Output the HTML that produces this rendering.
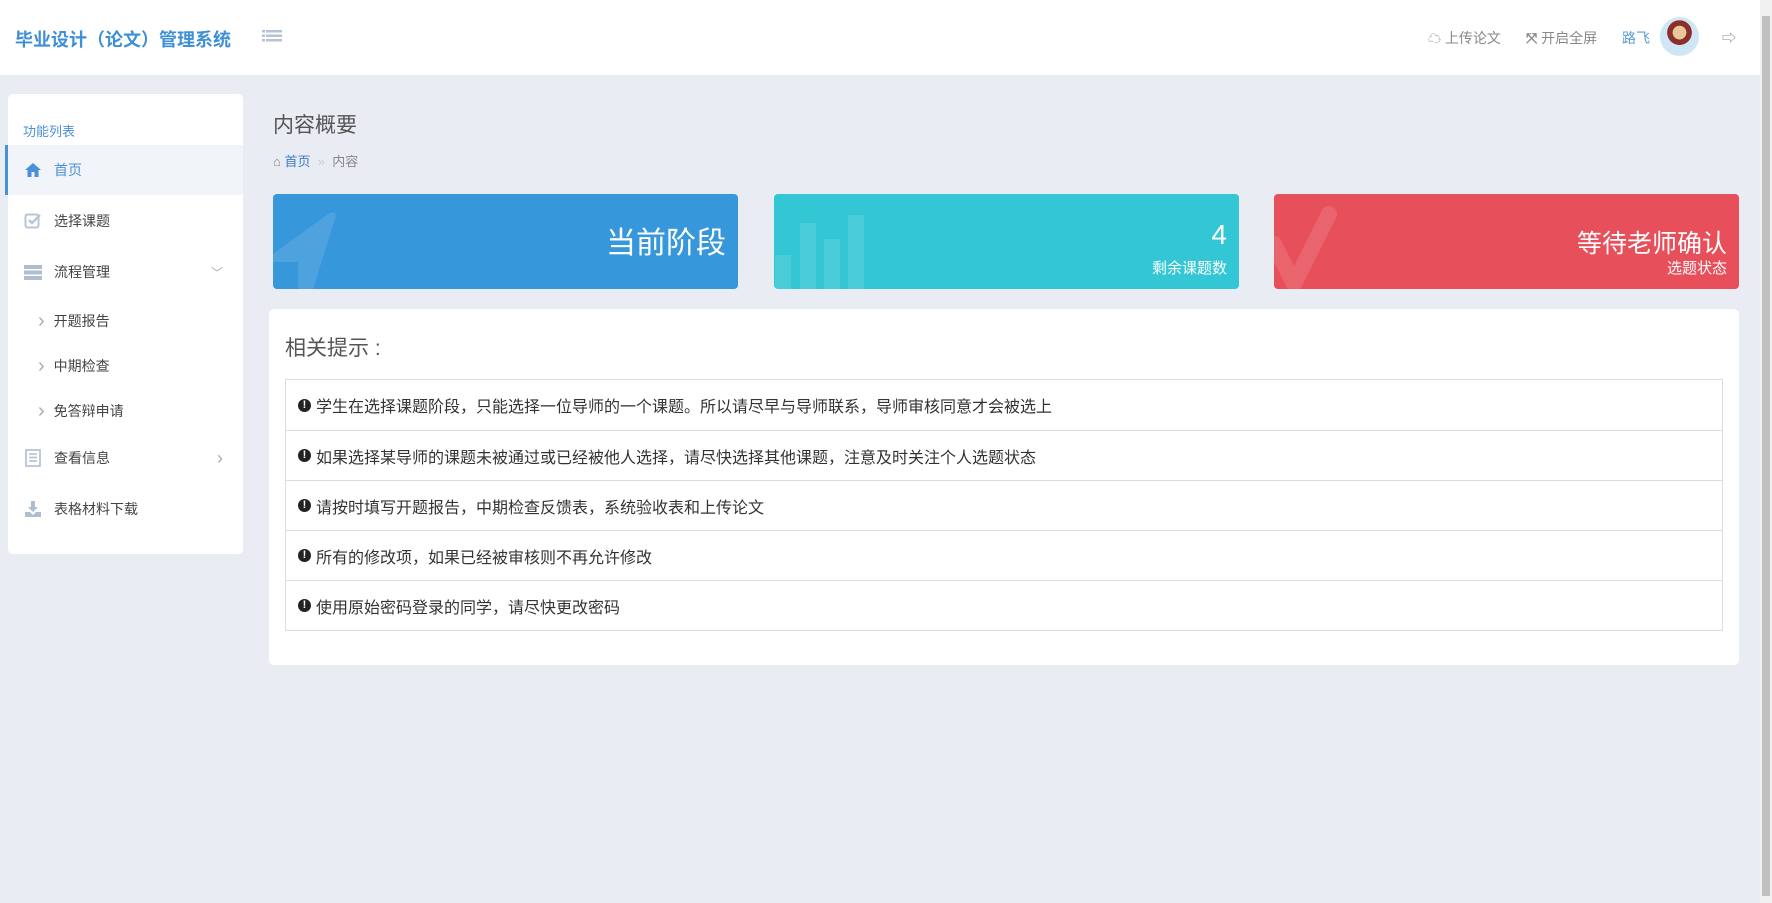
<!DOCTYPE html>
<html><head><meta charset="utf-8"><style>
*{margin:0;padding:0;box-sizing:border-box}
body{width:1772px;height:903px;overflow:hidden;background:#e9ecf3;font-family:"Liberation Sans","Noto Sans CJK SC",sans-serif;position:relative;color:#333}
.hdr{position:absolute;left:0;top:0;width:1760px;height:75px;background:#fff}
.title{position:absolute;left:15px;top:26px;font-size:18px;font-weight:bold;color:#3d8fd6}
.menu{position:absolute;left:262px;top:29px}
.hr{position:absolute;top:28px;font-size:14px;color:#888}
.sb{position:absolute;right:0;top:0;width:12px;height:903px;background:#f1f1f1}
.sb div{position:absolute;left:2px;top:16px;width:8px;height:880px;background:#c1c1c1}
.side{position:absolute;left:8px;top:94px;width:235px;height:460px;background:#fff;border-radius:5px}
.side .lbl{position:absolute;left:15px;top:27px;font-size:13px;color:#4a90d9}
.it{position:absolute;left:0;width:235px;height:50px;font-size:14px;color:#444;display:flex;align-items:center}
.it .ic{width:18px;height:18px;margin-left:16px;margin-right:12px}
.act{background:#f1f4f8;border-left:3px solid #4a90d9;left:-3px;width:238px}
.sub{position:absolute;left:30px;font-size:14px;color:#444;line-height:20px}
.sub::before{content:"›";color:#aaa;font-size:20px;margin-right:9px;position:relative;top:1px}
.ct{position:absolute;left:273px;top:109px;font-size:21px;color:#555}
.bc{position:absolute;left:273px;top:151px;font-size:13px;color:#888}
.card{position:absolute;top:194px;height:95px;width:465px;border-radius:4px;overflow:hidden;color:#fff}
.panel{position:absolute;left:269px;top:309px;width:1470px;height:356px;background:#fff;border-radius:5px}
.panel h3{position:absolute;left:16px;top:23px;font-size:21px;font-weight:normal;color:#555}
.tb{position:absolute;left:16px;top:70px;width:1438px;border:1px solid #ddd}
.row{height:50px;border-top:1px solid #ddd;display:flex;align-items:center;padding-left:12px;font-size:16px;color:#333}
.row:first-child{border-top:none}
.ex{display:inline-block;width:13px;height:13px;border-radius:50%;background:#222;color:#fff;font-size:11px;font-weight:bold;text-align:center;line-height:13px;margin-right:5px}
</style></head><body>
<div class="hdr">
<div class="title">毕业设计（论文）管理系统</div>
<svg class="menu" width="20" height="16" viewBox="0 0 20 16"><g fill="#b5c3d4"><rect x="0" y="1" width="3" height="2.5"/><rect x="4" y="1" width="16" height="2.5"/><rect x="0" y="5.5" width="3" height="2.5"/><rect x="4" y="5.5" width="16" height="2.5"/><rect x="0" y="10" width="3" height="2.5"/><rect x="4" y="10" width="16" height="2.5"/></g></svg>
<div class="hr" style="left:1428px"><span style="font-size:13px">☁</span> 上传论文</div>
<div class="hr" style="left:1526px"><span style="font-weight:bold">⤧</span> 开启全屏</div>
<div class="hr" style="left:1622px;color:#5b9bd5">路飞</div>
<div style="position:absolute;left:1660px;top:17px;width:39px;height:39px;border-radius:50%;background:radial-gradient(circle at 50% 40%,#e8c79a 0 22%,#8b2f2a 23% 40%,#cfe6f7 41%);"></div>
<div class="hr" style="left:1722px;font-size:14px">⇨</div>
</div>
<div class="sb"><div></div></div>

<div class="side">
<div class="lbl">功能列表</div>
<div class="it act" style="top:51px"><svg class="ic" viewBox="0 0 18 18"><path d="M9 2L1 9h2.5v7h4v-5h3v5h4V9H17z" fill="#4a90d9"/></svg><span style="color:#4a90d9">首页</span></div>
<div class="it" style="top:102px"><svg class="ic" viewBox="0 0 18 18"><rect x="1.5" y="2.5" width="13" height="13" rx="2" fill="none" stroke="#b8c6d6" stroke-width="2"/><path d="M5 8l3 3 8-8" fill="none" stroke="#b8c6d6" stroke-width="2.5"/></svg>选择课题</div>
<div class="it" style="top:153px"><svg class="ic" viewBox="0 0 18 18"><rect x="0" y="2" width="18" height="4" fill="#aebdd0"/><rect x="0" y="7.5" width="18" height="4" fill="#aebdd0"/><rect x="0" y="13" width="18" height="4" fill="#aebdd0"/></svg>流程管理<span style="position:absolute;right:20px;color:#aaa;font-size:12px">﹀</span></div>
<div class="sub" style="top:216px">开题报告</div>
<div class="sub" style="top:261px">中期检查</div>
<div class="sub" style="top:306px">免答辩申请</div>
<div class="it" style="top:339px"><svg class="ic" viewBox="0 0 18 18"><rect x="2" y="1" width="14" height="16" fill="none" stroke="#aebdd0" stroke-width="1.6"/><path d="M5 5h8M5 8.5h8M5 12h8" stroke="#aebdd0" stroke-width="1.4"/></svg>查看信息<span style="position:absolute;right:20px;color:#aaa;font-size:18px">›</span></div>
<div class="it" style="top:390px"><svg class="ic" viewBox="0 0 18 18"><path d="M7 1h4v6h3l-5 5-5-5h3z M1 12h5l3 3 3-3h5v5H1z" fill="#aebdd0"/></svg>表格材料下载</div>
</div>

<div class="ct">内容概要</div>
<div class="bc"><span style="color:#888">⌂</span> <span style="color:#3a7bc8">首页</span> &nbsp;<span style="color:#ccc">»</span>&nbsp; 内容</div>

<div class="card" style="left:273px;background:#3697db">
<svg style="position:absolute;left:0;top:0" width="100" height="95"><path d="M0 60L55 20Q65 15 62 25L40 95H25V68H0z" fill="rgba(255,255,255,.12)"/></svg>
<div style="position:absolute;right:12px;top:24px;font-size:30px">当前阶段</div></div>
<div class="card" style="left:774px;background:#33c6d4">
<svg style="position:absolute;left:0;top:0" width="100" height="95"><g fill="rgba(255,255,255,.12)"><rect x="1" y="61" width="16" height="34"/><rect x="26" y="29" width="16" height="66"/><rect x="50" y="45" width="16" height="50"/><rect x="74" y="21" width="16" height="74"/></g></svg>
<div style="position:absolute;right:12px;top:25px;font-size:28px">4</div>
<div style="position:absolute;right:12px;top:63px;font-size:15px">剩余课题数</div></div>
<div class="card" style="left:1274px;background:#e74f5b">
<svg style="position:absolute;left:0;top:0" width="100" height="95"><path d="M0 50L20 90 55 20" fill="none" stroke="rgba(255,255,255,.12)" stroke-width="16" stroke-linecap="round"/></svg>
<div style="position:absolute;right:12px;top:30px;font-size:25px">等待老师确认</div>
<div style="position:absolute;right:12px;top:63px;font-size:15px">选题状态</div></div>

<div class="panel"><h3>相关提示 :</h3>
<div class="tb">
<div class="row"><span class="ex">!</span>学生在选择课题阶段，只能选择一位导师的一个课题。所以请尽早与导师联系，导师审核同意才会被选上</div>
<div class="row"><span class="ex">!</span>如果选择某导师的课题未被通过或已经被他人选择，请尽快选择其他课题，注意及时关注个人选题状态</div>
<div class="row"><span class="ex">!</span>请按时填写开题报告，中期检查反馈表，系统验收表和上传论文</div>
<div class="row"><span class="ex">!</span>所有的修改项，如果已经被审核则不再允许修改</div>
<div class="row"><span class="ex">!</span>使用原始密码登录的同学，请尽快更改密码</div>
</div></div>
</body></html>
